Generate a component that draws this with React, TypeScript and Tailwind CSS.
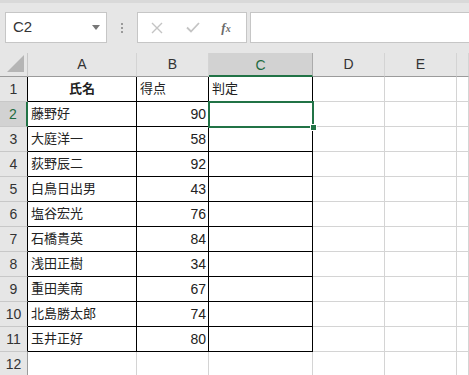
import React from 'react';

const rows: [string, string, string][] = [
  ['氏名', '得点', '判定'],
  ['藤野好', '90', ''],
  ['大庭洋一', '58', ''],
  ['荻野辰二', '92', ''],
  ['白鳥日出男', '43', ''],
  ['塩谷宏光', '76', ''],
  ['石橋貴英', '84', ''],
  ['浅田正樹', '34', ''],
  ['重田美南', '67', ''],
  ['北島勝太郎', '74', ''],
  ['玉井正好', '80', ''],
];

const cols = ['A', 'B', 'C', 'D', 'E', ''];

const font = { fontFamily: '"Liberation Sans", "Noto Sans CJK JP", sans-serif' };

const App = () => {
  return (
    <div className="w-[469px] h-[375px] overflow-hidden bg-white text-[#222]" style={font}>
      {/* Formula bar */}
      <div className="h-[53px] bg-[#e6e6e6] border-t-[3px] border-[#d9d9d9] flex items-start pt-[9px] pl-[5px]">
        <div className="w-[102px] h-[31px] bg-white border border-[#c6c6c6] flex items-center justify-between pl-[7px] pr-[6px]">
          <span className="text-[15px] text-[#333]">C2</span>
          <svg width="8" height="5" viewBox="0 0 8 5">
            <path d="M0 0h8L4 5z" fill="#777" />
          </svg>
        </div>
        <div className="w-[30px] h-[31px] flex flex-col items-center justify-center gap-[2px]">
          <span className="w-[2px] h-[2px] bg-[#9a9a9a]" />
          <span className="w-[2px] h-[2px] bg-[#9a9a9a]" />
          <span className="w-[2px] h-[2px] bg-[#9a9a9a]" />
        </div>
        <div className="w-[110px] h-[31px] bg-white border border-[#c6c6c6] flex items-center">
          <div className="w-[36px] flex justify-center pl-[2px]">
            <svg width="12" height="12" viewBox="0 0 12 12">
              <path d="M1 1l10 10M11 1L1 11" stroke="#c4c4c4" strokeWidth="1.4" />
            </svg>
          </div>
          <div className="w-[36px] flex justify-center pl-[2px]">
            <svg width="14" height="11" viewBox="0 0 14 11">
              <path d="M1 5.5l4 4L13 1" stroke="#c4c4c4" strokeWidth="1.8" fill="none" />
            </svg>
          </div>
          <div className="flex-1 flex justify-center pr-[4px]">
            <span className="italic text-[#6a6a6a] text-[13px] font-bold" style={{ fontFamily: '"Liberation Serif", serif' }}>
              f<span className="text-[10px]">x</span>
            </span>
          </div>
        </div>
        <div className="flex-1 h-[31px] ml-[3px] mr-[-4px] bg-white border border-[#c6c6c6]" />
      </div>

      {/* Sheet */}
      <div className="relative grid grid-cols-[28px_109px_72px_104px_72px_72px_1fr]">
        {/* Column headers */}
        <div className="h-[24px] bg-[#e6e6e6] border-r border-b border-[#9b9b9b] border-r-[#c8c8c8] relative">
          <svg className="absolute right-[3px] bottom-[4px]" width="17" height="17" viewBox="0 0 17 17">
            <path d="M17 0v17H0z" fill="#b5b5b5" />
          </svg>
        </div>
        {cols.map((c, i) => (
          <div
            key={i}
            className={
              c === 'C'
                ? 'h-[24px] bg-[#d2d2d2] border-r border-[#ababab] border-b-2 border-b-[#217346] text-[#1e6b41] text-[14px] flex items-center justify-center pt-[2px]'
                : 'h-[24px] bg-[#e6e6e6] border-r border-r-[#d4d4d4] border-b border-b-[#9b9b9b] text-[#333] text-[14px] flex items-center justify-center'
            }
          >
            {c}
          </div>
        ))}

        {/* Data rows */}
        {rows.map((r, ri) => {
          const n = ri + 1;
          const sel = n === 2;
          return (
            <React.Fragment key={ri}>
              <div
                className={
                  sel
                    ? 'h-[25px] bg-[#d2d2d2] border-r-2 border-r-[#217346] border-b border-b-[#c8c8c8] text-[#1e6b41] text-[14px] flex items-center justify-center'
                    : 'h-[25px] bg-[#e6e6e6] border-r border-r-black border-b border-b-[#c8c8c8] text-[#333] text-[14px] flex items-center justify-center'
                }
              >
                {n}
              </div>
              <div
                className={
                  'h-[25px] border-r border-b border-black text-[13px] flex items-center ' +
                  (n === 1 ? 'justify-center font-bold' : 'pl-[3px]')
                }
              >
                {r[0]}
              </div>
              <div
                className={
                  'h-[25px] border-r border-b border-black flex items-center ' +
                  (n === 1 ? 'text-[13px] pl-[3px]' : 'text-[14px] justify-end pr-[2px]')
                }
              >
                {r[1]}
              </div>
              <div className="h-[25px] border-r border-b border-black text-[13px] flex items-center pl-[3px]">
                {r[2]}
              </div>
              <div className="h-[25px] border-r border-b border-[#d4d4d4]" />
              <div className="h-[25px] border-r border-b border-[#d4d4d4]" />
              <div className="h-[25px] border-r border-b border-[#d4d4d4]" />
            </React.Fragment>
          );
        })}

        {/* Row 12 */}
        <div className="h-[25px] bg-[#e6e6e6] border-r border-r-[#9b9b9b] border-b border-b-[#c8c8c8] text-[#333] text-[14px] flex items-center justify-center">
          12
        </div>
        <div className="h-[25px] border-r border-b border-[#d4d4d4]" />
        <div className="h-[25px] border-r border-b border-[#d4d4d4]" />
        <div className="h-[25px] border-r border-b border-[#d4d4d4]" />
        <div className="h-[25px] border-r border-b border-[#d4d4d4]" />
        <div className="h-[25px] border-r border-b border-[#d4d4d4]" />
        <div className="h-[25px] border-r border-b border-[#d4d4d4]" />

        {/* Selection C2 */}
        <div className="absolute left-[208px] top-[48px] w-[106px] h-[27px] border-2 border-[#217346] pointer-events-none" />
        <div className="absolute left-[310px] top-[71px] w-[7px] h-[7px] bg-[#217346] border border-white pointer-events-none" />
      </div>
    </div>
  );
};

export default App;
